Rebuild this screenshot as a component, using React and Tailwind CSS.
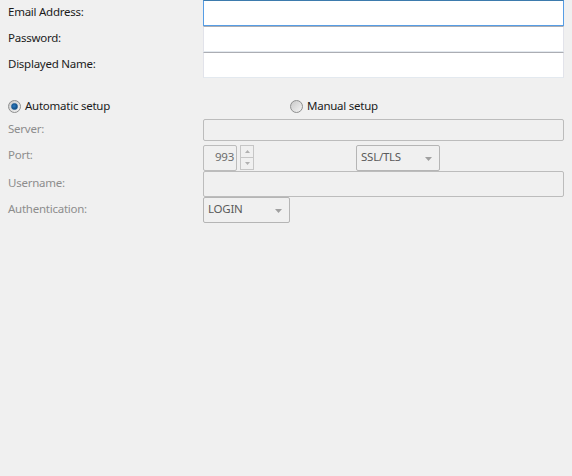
import React from 'react';

const font = { fontFamily: '"Noto Sans", "Liberation Sans", sans-serif' };

const Label = ({ children, disabled }) => (
    <div className={`pl-2 pb-[2px] flex items-center text-[11.5px] tracking-[-0.25px] ${disabled ? 'text-[#8d8d8d]' : 'text-[#1b1b1b]'}`}>{children}</div>
);

const TextBox = ({ focused }) => (
    <div
        className={`h-[26px] bg-white border ${focused
            ? 'border-[#569de5] border-t-[#3d7bad]'
            : 'border-[#e2e3ea] border-t-[#abadb3] border-b-[#e3e9ef]'}`}
    />
);

const DisabledBox = ({ h = 'h-[26px]' }) => (
    <div className={`${h} bg-[#f0f0f0] border border-[#bcbcbc] rounded-[2px]`} />
);

const Radio = ({ checked, label }) => (
    <label className="flex items-center gap-[4px] text-[11.5px] tracking-[-0.25px] text-[#1b1b1b]">
        <span className="w-[13px] h-[13px] rounded-full border border-[#8e8f8f] bg-gradient-to-br from-[#c9c9c9] to-[#f4f4f4] flex items-center justify-center">
            {checked && (
                <span className="w-[7px] h-[7px] rounded-full bg-[radial-gradient(circle_at_40%_40%,#2a7cc4,#0b3c6b)] border border-[#1a5a94]" />
            )}
        </span>
        {label}
    </label>
);

const Combo = ({ value, width }) => (
    <div className={`${width} h-[26px] border border-[#b5b5b5] rounded-[2px] bg-[#f0f0f0] flex items-center justify-between pl-[4px] pr-[7px] pb-[2px] text-[11.5px] tracking-[-0.25px] text-[#5b5b5b]`}>
        <span>{value}</span>
        <svg width="7" height="4" viewBox="0 0 7 4" className="mt-[3px]"><path d="M0 0h7L3.5 4z" fill="#a0a0a0" /></svg>
    </div>
);

const Spinner = () => (
    <div className="w-[14px] h-[25px] border border-[#c6c6c6] flex flex-col ml-[3px]">
        <div className="flex-1 border-b border-[#c6c6c6] flex items-center justify-center">
            <svg width="5" height="3" viewBox="0 0 5 3"><path d="M2.5 0L5 3H0z" fill="#b0b0b0" /></svg>
        </div>
        <div className="flex-1 flex items-center justify-center">
            <svg width="5" height="3" viewBox="0 0 5 3"><path d="M0 0h5L2.5 3z" fill="#b0b0b0" /></svg>
        </div>
    </div>
);

export default function App() {
    return (
        <div className="w-[572px] h-[476px] bg-[#f0f0f0] overflow-hidden" style={font}>
            <div className="grid grid-cols-[203px_1fr] pr-2">
                <Label>Email Address:</Label>
                <TextBox focused />
                <Label>Password:</Label>
                <TextBox />
                <Label>Displayed Name:</Label>
                <TextBox />
            </div>

            <div className="grid grid-cols-[282px_1fr] h-[18px] mt-[19px] pl-2">
                <Radio checked label="Automatic setup" />
                <Radio label="Manual setup" />
            </div>

            <div className="grid grid-cols-[203px_1fr] pr-2 mt-[4px]">
                <Label disabled>Server:</Label>
                <DisabledBox h="h-[22px]" />

                <Label disabled>Port:</Label>
                <div className="flex items-start h-[26px] mt-[4px]">
                    <div className="w-[34px] h-[26px] border border-[#bcbcbc] rounded-[2px] flex items-center justify-end pr-[2px] pb-[2px] text-[11.5px] tracking-[-0.25px] text-[#6d6d6d]">993</div>
                    <Spinner />
                    <div className="ml-[102px]">
                        <Combo value="SSL/TLS" width="w-[84px]" />
                    </div>
                </div>

                <Label disabled>Username:</Label>
                <DisabledBox />

                <Label disabled>Authentication:</Label>
                <Combo value="LOGIN" width="w-[87px]" />
            </div>
        </div>
    );
}
